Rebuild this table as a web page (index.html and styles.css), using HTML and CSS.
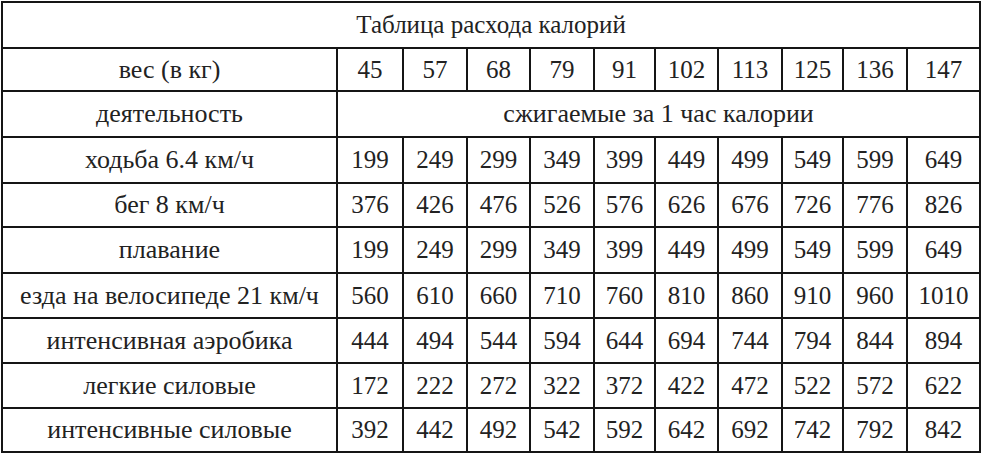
FILE: index.html
```html
<!DOCTYPE html>
<html lang="ru">
<head>
<meta charset="utf-8">
<title>Таблица расхода калорий</title>
<link rel="stylesheet" href="styles.css">
</head>
<body>
<table class="kcal">
  <colgroup>
    <col class="c-act">
    <col class="c66"><col class="c64"><col class="c63"><col class="c64"><col class="c61">
    <col class="c63"><col class="c64"><col class="c61"><col class="c64"><col class="c73">
  </colgroup>
  <tr class="r46"><td class="title" colspan="11">Таблица расхода калорий</td></tr>
  <tr class="r43 nums"><td>вес (в кг)</td><td>45</td><td>57</td><td>68</td><td>79</td><td>91</td><td>102</td><td>113</td><td>125</td><td>136</td><td>147</td></tr>
  <tr class="r46"><td>деятельность</td><td colspan="10">сжигаемые за 1 час калории</td></tr>
  <tr class="r46 nums"><td>ходьба 6.4 км/ч</td><td>199</td><td>249</td><td>299</td><td>349</td><td>399</td><td>449</td><td>499</td><td>549</td><td>599</td><td>649</td></tr>
  <tr class="r44 nums"><td>бег 8 км/ч</td><td>376</td><td>426</td><td>476</td><td>526</td><td>576</td><td>626</td><td>676</td><td>726</td><td>776</td><td>826</td></tr>
  <tr class="r46 nums"><td>плавание</td><td>199</td><td>249</td><td>299</td><td>349</td><td>399</td><td>449</td><td>499</td><td>549</td><td>599</td><td>649</td></tr>
  <tr class="r45 nums"><td>езда на велосипеде 21 км/ч</td><td>560</td><td>610</td><td>660</td><td>710</td><td>760</td><td>810</td><td>860</td><td>910</td><td>960</td><td>1010</td></tr>
  <tr class="r45 nums"><td>интенсивная аэробика</td><td>444</td><td>494</td><td>544</td><td>594</td><td>644</td><td>694</td><td>744</td><td>794</td><td>844</td><td>894</td></tr>
  <tr class="r45 nums"><td>легкие силовые</td><td>172</td><td>222</td><td>272</td><td>322</td><td>372</td><td>422</td><td>472</td><td>522</td><td>572</td><td>622</td></tr>
  <tr class="r44 nums"><td>интенсивные силовые</td><td>392</td><td>442</td><td>492</td><td>542</td><td>592</td><td>642</td><td>692</td><td>742</td><td>792</td><td>842</td></tr>
</table>
</body>
</html>
```
FILE: styles.css
```css
html, body {
  margin: 0;
  padding: 0;
  background: #ffffff;
  font-family: "Liberation Serif", serif;
}
body {
  padding: 1px 0 0 1px;
}
.kcal {
  border-collapse: collapse;
  table-layout: fixed;
  width: 980px;
  font-family: "Liberation Serif", serif;
  font-size: 26px;
  color: #222222;
}
.kcal td {
  font-family: "Liberation Serif", serif;
  font-size: 26px;
  border: 2px solid #151515;
  padding: 0;
  text-align: center;
  vertical-align: middle;
  white-space: nowrap;
  overflow: hidden;
}
.kcal .nums td + td {
  font-size: 25px;
}
.kcal td.title {
  font-size: 25px;
}
.c-act { width: 335px; }
.c61 { width: 61px; }
.c63 { width: 63px; }
.c64 { width: 64px; }
.c66 { width: 66px; }
.c73 { width: 73px; }
.r43 { height: 43px; }
.r44 { height: 44px; }
.r45 { height: 45px; }
.r46 { height: 46px; }
```
